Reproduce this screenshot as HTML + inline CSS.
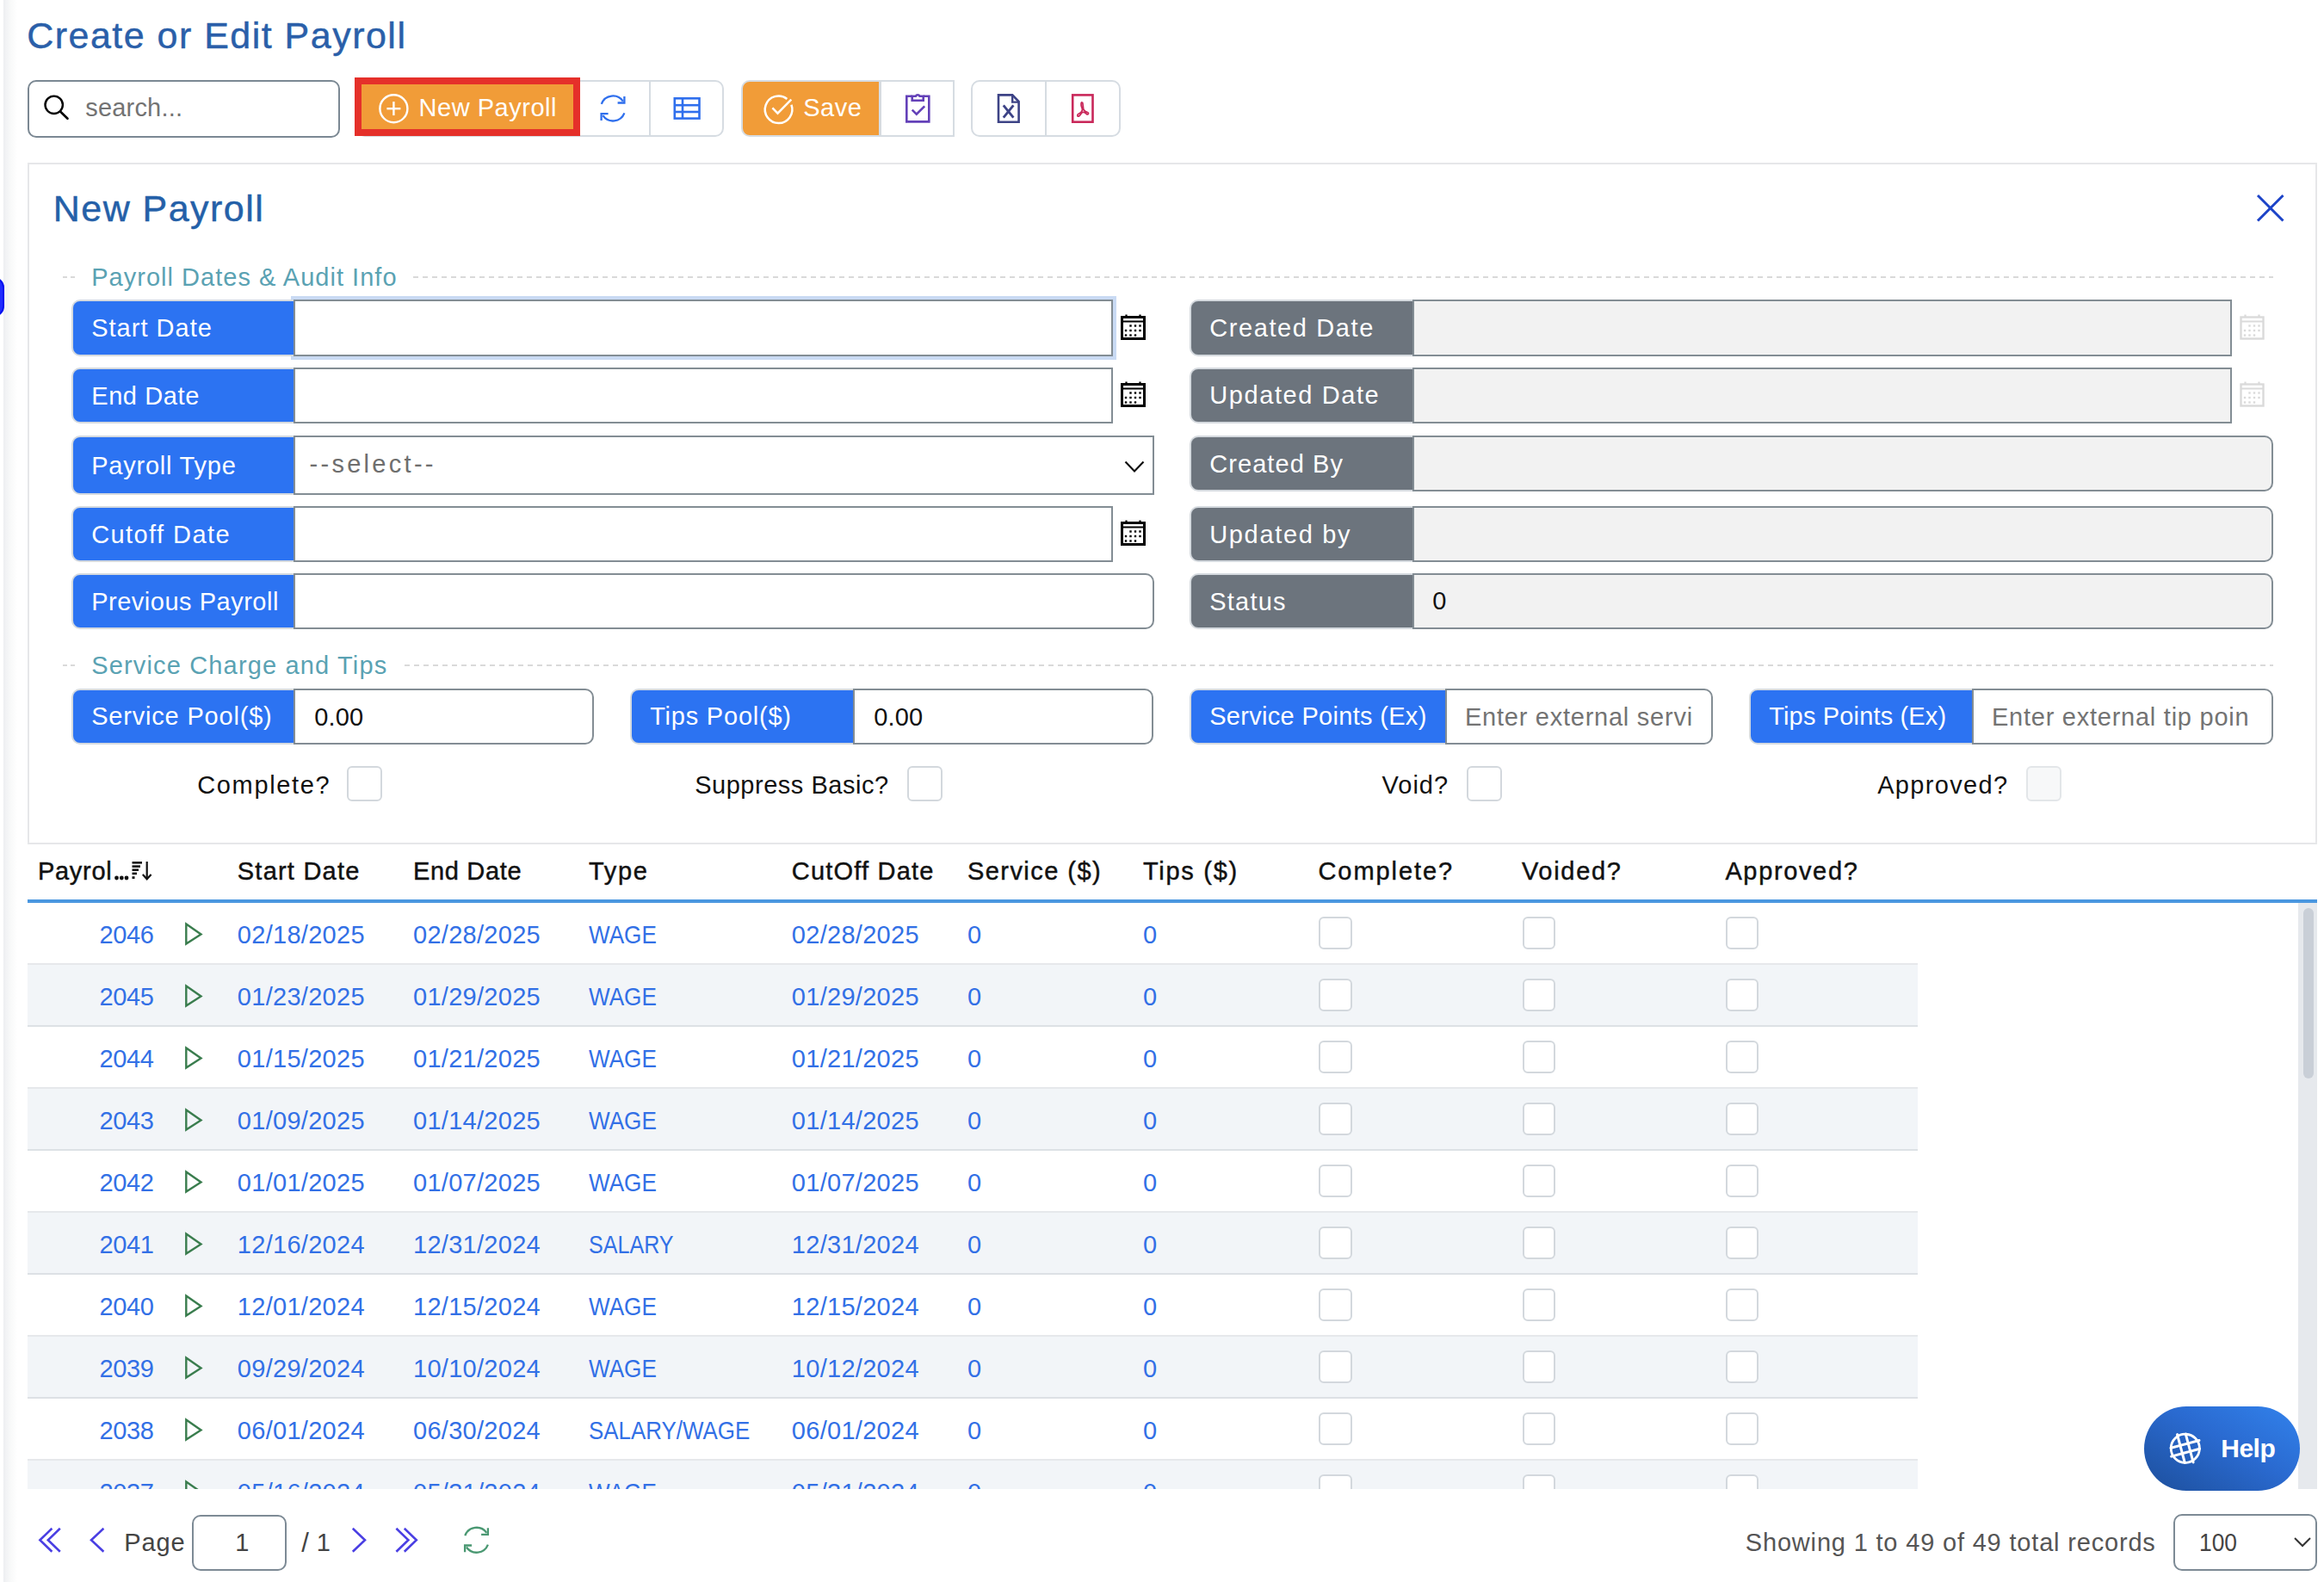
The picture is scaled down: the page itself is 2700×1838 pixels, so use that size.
<!DOCTYPE html><html><head><meta charset="utf-8"><style>
html,body{margin:0;padding:0;}
body{width:2700px;height:1838px;position:relative;overflow:hidden;background:#fff;font-family:'Liberation Sans', sans-serif;}
.t{position:absolute;white-space:nowrap;line-height:1;font-family:'Liberation Sans', sans-serif;}
.r{position:absolute;box-sizing:border-box;}
svg{position:absolute;overflow:visible;}
</style></head><body>

<div class="r" style="left:4px;top:0px;width:16px;height:1838px;background:linear-gradient(to right,#eceef1 0px,#f2f3f5 3px,#f8f9f9 8px,#fff 16px)"></div>
<div class="r" style="left:-20px;top:322px;width:24.5px;height:46px;background:#1f2bff;border:2px solid #0010f0;border-radius:12px"></div>
<div class="t" style="left:31.2px;top:20.4px;font-size:43px;color:#2a5fa9;letter-spacing:1.48px;-webkit-text-stroke:0.45px currentColor;">Create or Edit Payroll</div>
<div class="r" style="left:32px;top:93px;width:363px;height:67px;border:2px solid #7b8893;border-radius:10px;background:#fff"></div>
<svg style="left:0;top:0" width="2700" height="1838"><circle cx="62.7" cy="121.8" r="10.2" fill="none" stroke="#000" stroke-width="2.4"/><line x1="70" y1="129.5" x2="78.5" y2="137.8" stroke="#000" stroke-width="2.6" stroke-linecap="round"/></svg>
<div class="t" style="left:99.2px;top:111.1px;font-size:29px;color:#737373;letter-spacing:0.2px;">search...</div>
<div class="r" style="left:414px;top:93px;width:427px;height:66px;border:2px solid #d6dce2;border-radius:10px;background:#fff"></div>
<div class="r" style="left:754px;top:94px;width:2px;height:64px;background:#d6dce2"></div>
<div class="r" style="left:412px;top:90px;width:262px;height:68px;background:#f19c38;border:8px solid #e5302a"></div>
<svg style="left:0;top:0" width="2700" height="1838"><circle cx="457.4" cy="126.2" r="16" fill="none" stroke="#fff" stroke-width="2.4"/><line x1="457.4" y1="118.1" x2="457.4" y2="134.1" stroke="#fff" stroke-width="2.4"/><line x1="449.4" y1="126.2" x2="465.4" y2="126.2" stroke="#fff" stroke-width="2.4"/></svg>
<div class="t" style="left:486.5px;top:110.6px;font-size:29px;color:#fff;letter-spacing:0.53px;">New Payroll</div>
<svg style="left:0;top:0" width="2700" height="1838"><g transform="translate(712 126) scale(1.0)" fill="none" stroke="#2f6fed" stroke-width="2.3"><path d="M-13.2 -5.2 A14.2 14.2 0 0 1 11.8 -8.4"/><polyline points="13.4,-14 13.4,-6.5 5.6,-6.5"/><path d="M13.4 5.4 A14.2 14.2 0 0 1 -11.6 8.2"/><polyline points="-13.4,14 -13.4,6.2 -5.4,6.2"/></g></svg>
<svg style="left:0;top:0" width="2700" height="1838" fill="none" stroke="#2f6fed" stroke-width="2.6"><rect x="783.8" y="114.3" width="28.7" height="23.3"/><line x1="783" y1="122.2" x2="813" y2="122.2"/><line x1="783" y1="130" x2="813" y2="130"/><line x1="793" y1="114" x2="793" y2="138"/></svg>
<div class="r" style="left:861px;top:93px;width:162px;height:66px;background:#f19c38;border:2px solid #d6dce2;border-radius:10px 0 0 10px"></div>
<div class="r" style="left:1022px;top:93px;width:87px;height:66px;border:2px solid #d6dce2;background:#fff"></div>
<svg style="left:0;top:0" width="2700" height="1838" fill="none" stroke="#fff" stroke-width="2.5"><path d="M914.4 114.9 A15.8 15.8 0 1 0 919.4 121.8"/><polyline points="897.4,125.3 903.5,131.6 919.3,115.6"/></svg>
<div class="t" style="left:933.2px;top:110.6px;font-size:29px;color:#fff;letter-spacing:0.53px;">Save</div>
<svg style="left:0;top:0" width="2700" height="1838" fill="none" stroke="#6340b8" stroke-width="2.6"><path d="M1059.5 111.7 H1053.3 V141.4 H1079.3 V111.7 H1073"/><path d="M1059.7 111.7 V116.8 H1072.7 V111.7 H1068.5 A2.6 2.6 0 0 0 1063.9 111.7 Z"/><polyline points="1059.7,127.6 1064.8,132.6 1074.2,123.3"/></svg>
<div class="r" style="left:1128px;top:93px;width:174px;height:66px;border:2px solid #d6dce2;border-radius:10px;background:#fff"></div>
<div class="r" style="left:1214px;top:94px;width:2px;height:64px;background:#d6dce2"></div>
<svg style="left:0;top:0" width="2700" height="1838" fill="none"><path d="M1160 110.4 H1176.2 L1183.6 118 V141.7 H1160 Z" stroke="#3d4386" stroke-width="2.6"/><path d="M1176.2 110.4 V118.6 H1183.6" stroke="#3d4386" stroke-width="2.4"/><line x1="1165.8" y1="122.3" x2="1177.4" y2="136.6" stroke="#3d4386" stroke-width="2.8"/><line x1="1177.4" y1="122.3" x2="1165.8" y2="136.6" stroke="#3d4386" stroke-width="2.8"/><rect x="1246.2" y="110.4" width="23.3" height="31.3" stroke="#c9285a" stroke-width="2.6"/><path d="M1257 118.5 C1255.2 119.5 1256.2 124 1257.3 126 C1258 129 1255.5 131 1253.5 132 C1251 133 1251.5 136 1253.5 135 C1255.5 133.5 1256 131 1258 130.5 C1260 130 1261 131 1262.5 132.5 C1264 134 1265.5 131 1263.5 130.5 C1261.5 130 1260 129.5 1259 127.5 C1258 125.5 1258.6 120 1257.3 118.6" stroke="#c9285a" stroke-width="1.8"/></svg>
<div class="r" style="left:32px;top:189px;width:2660px;height:792px;border:2px solid #e6e7e9;background:#fff"></div>
<div class="t" style="left:61.8px;top:221.1px;font-size:43px;color:#2460a8;letter-spacing:1.46px;-webkit-text-stroke:0.45px currentColor;">New Payroll</div>
<svg style="left:0;top:0" width="2700" height="1838" stroke="#1d44c8" stroke-width="3"><line x1="2623" y1="227" x2="2652.5" y2="256.5"/><line x1="2652.5" y1="227" x2="2623" y2="256.5"/></svg>
<div class="r" style="left:73px;top:321px;width:15px;height:2px;background:repeating-linear-gradient(to right,#d9d9d9 0 5px,transparent 5px 9px)"></div>
<div class="t" style="left:106.2px;top:307.6px;font-size:29px;color:#5aa2b3;letter-spacing:1.02px;">Payroll Dates &amp; Audit Info</div>
<div class="r" style="left:480px;top:321px;width:2161px;height:2px;background:repeating-linear-gradient(to right,#d9d9d9 0 6px,transparent 6px 11px)"></div>
<div class="r" style="left:338px;top:344px;width:959px;height:74px;background:#c9daf3"></div>
<div class="r" style="left:83px;top:348px;width:259px;height:66px;background:#2c73f2;border:2px solid #d5dadf;border-right:none;border-radius:10px 0 0 10px"></div>
<div class="t" style="left:106.2px;top:367.1px;font-size:29px;color:#fff;letter-spacing:1.01px;">Start Date</div>
<div class="r" style="left:341px;top:348px;width:952px;height:66px;background:#fff;border:2px solid #838d94;border-radius:0;"></div>
<svg style="left:1302px;top:364.5px" width="29" height="30" viewBox="0 0 29 30"><rect x="1.5" y="3.5" width="26" height="25" fill="none" stroke="#000" stroke-width="3"/><line x1="1.5" y1="8.5" x2="27.5" y2="8.5" stroke="#000" stroke-width="2"/><line x1="6.5" y1="0.5" x2="6.5" y2="4" stroke="#000" stroke-width="2.2"/><line x1="22.5" y1="0.5" x2="22.5" y2="4" stroke="#000" stroke-width="2.2"/><rect x="10.3" y="12.3" width="2.4" height="2.4" fill="#000"/><rect x="15.8" y="12.3" width="2.4" height="2.4" fill="#000"/><rect x="21.3" y="12.3" width="2.4" height="2.4" fill="#000"/><rect x="4.8" y="17.8" width="2.4" height="2.4" fill="#000"/><rect x="10.3" y="17.8" width="2.4" height="2.4" fill="#000"/><rect x="15.8" y="17.8" width="2.4" height="2.4" fill="#000"/><rect x="21.3" y="17.8" width="2.4" height="2.4" fill="#000"/><rect x="4.8" y="23.3" width="2.4" height="2.4" fill="#000"/><rect x="10.3" y="23.3" width="2.4" height="2.4" fill="#000"/><rect x="15.8" y="23.3" width="2.4" height="2.4" fill="#000"/></svg>
<div class="r" style="left:83px;top:427px;width:259px;height:65px;background:#2c73f2;border:2px solid #d5dadf;border-right:none;border-radius:10px 0 0 10px"></div>
<div class="t" style="left:106.2px;top:445.6px;font-size:29px;color:#fff;letter-spacing:0.6px;">End Date</div>
<div class="r" style="left:341px;top:427px;width:952px;height:65px;background:#fff;border:2px solid #838d94;border-radius:0;"></div>
<svg style="left:1302px;top:443.0px" width="29" height="30" viewBox="0 0 29 30"><rect x="1.5" y="3.5" width="26" height="25" fill="none" stroke="#000" stroke-width="3"/><line x1="1.5" y1="8.5" x2="27.5" y2="8.5" stroke="#000" stroke-width="2"/><line x1="6.5" y1="0.5" x2="6.5" y2="4" stroke="#000" stroke-width="2.2"/><line x1="22.5" y1="0.5" x2="22.5" y2="4" stroke="#000" stroke-width="2.2"/><rect x="10.3" y="12.3" width="2.4" height="2.4" fill="#000"/><rect x="15.8" y="12.3" width="2.4" height="2.4" fill="#000"/><rect x="21.3" y="12.3" width="2.4" height="2.4" fill="#000"/><rect x="4.8" y="17.8" width="2.4" height="2.4" fill="#000"/><rect x="10.3" y="17.8" width="2.4" height="2.4" fill="#000"/><rect x="15.8" y="17.8" width="2.4" height="2.4" fill="#000"/><rect x="21.3" y="17.8" width="2.4" height="2.4" fill="#000"/><rect x="4.8" y="23.3" width="2.4" height="2.4" fill="#000"/><rect x="10.3" y="23.3" width="2.4" height="2.4" fill="#000"/><rect x="15.8" y="23.3" width="2.4" height="2.4" fill="#000"/></svg>
<div class="r" style="left:83px;top:506px;width:259px;height:69px;background:#2c73f2;border:2px solid #d5dadf;border-right:none;border-radius:10px 0 0 10px"></div>
<div class="t" style="left:106.2px;top:526.6px;font-size:29px;color:#fff;letter-spacing:0.78px;">Payroll Type</div>
<div class="r" style="left:341px;top:506px;width:1000px;height:69px;background:#fff;border:2px solid #838d94;border-radius:0;"></div>
<div class="t" style="left:359.5px;top:524.6px;font-size:29px;color:#6e6e6e;letter-spacing:3.29px;">--select--</div>
<svg style="left:0;top:0" width="2700" height="1838"><polyline points="1307.5,536.5 1318,547.5 1328.5,536.5" fill="none" stroke="#111" stroke-width="2.2"/></svg>
<div class="r" style="left:83px;top:588px;width:259px;height:65px;background:#2c73f2;border:2px solid #d5dadf;border-right:none;border-radius:10px 0 0 10px"></div>
<div class="t" style="left:106.2px;top:606.6px;font-size:29px;color:#fff;letter-spacing:1.42px;">Cutoff Date</div>
<div class="r" style="left:341px;top:588px;width:952px;height:65px;background:#fff;border:2px solid #838d94;border-radius:0;"></div>
<svg style="left:1302px;top:604.0px" width="29" height="30" viewBox="0 0 29 30"><rect x="1.5" y="3.5" width="26" height="25" fill="none" stroke="#000" stroke-width="3"/><line x1="1.5" y1="8.5" x2="27.5" y2="8.5" stroke="#000" stroke-width="2"/><line x1="6.5" y1="0.5" x2="6.5" y2="4" stroke="#000" stroke-width="2.2"/><line x1="22.5" y1="0.5" x2="22.5" y2="4" stroke="#000" stroke-width="2.2"/><rect x="10.3" y="12.3" width="2.4" height="2.4" fill="#000"/><rect x="15.8" y="12.3" width="2.4" height="2.4" fill="#000"/><rect x="21.3" y="12.3" width="2.4" height="2.4" fill="#000"/><rect x="4.8" y="17.8" width="2.4" height="2.4" fill="#000"/><rect x="10.3" y="17.8" width="2.4" height="2.4" fill="#000"/><rect x="15.8" y="17.8" width="2.4" height="2.4" fill="#000"/><rect x="21.3" y="17.8" width="2.4" height="2.4" fill="#000"/><rect x="4.8" y="23.3" width="2.4" height="2.4" fill="#000"/><rect x="10.3" y="23.3" width="2.4" height="2.4" fill="#000"/><rect x="15.8" y="23.3" width="2.4" height="2.4" fill="#000"/></svg>
<div class="r" style="left:83px;top:666px;width:259px;height:65px;background:#2c73f2;border:2px solid #d5dadf;border-right:none;border-radius:10px 0 0 10px"></div>
<div class="t" style="left:106.2px;top:684.6px;font-size:29px;color:#fff;letter-spacing:0.51px;">Previous Payroll</div>
<div class="r" style="left:341px;top:666px;width:1000px;height:65px;background:#fff;border:2px solid #838d94;border-radius:0 10px 10px 0;"></div>
<div class="r" style="left:1382px;top:348px;width:260px;height:66px;background:#6c747d;border:2px solid #d5dadf;border-right:none;border-radius:10px 0 0 10px"></div>
<div class="t" style="left:1405.2px;top:367.1px;font-size:29px;color:#fff;letter-spacing:1.6px;">Created Date</div>
<div class="r" style="left:1641px;top:348px;width:952px;height:66px;background:#f2f2f2;border:2px solid #838d94;border-radius:0;"></div>
<svg style="left:2602px;top:365.0px" width="29" height="30" viewBox="0 0 29 30"><rect x="1.5" y="3.5" width="26" height="25" fill="none" stroke="#dadada" stroke-width="2.4"/><line x1="1.5" y1="8.5" x2="27.5" y2="8.5" stroke="#dadada" stroke-width="2"/><line x1="6.5" y1="0.5" x2="6.5" y2="4" stroke="#dadada" stroke-width="2.2"/><line x1="22.5" y1="0.5" x2="22.5" y2="4" stroke="#dadada" stroke-width="2.2"/><rect x="10.3" y="12.3" width="2.4" height="2.4" fill="#dadada"/><rect x="15.8" y="12.3" width="2.4" height="2.4" fill="#dadada"/><rect x="21.3" y="12.3" width="2.4" height="2.4" fill="#dadada"/><rect x="4.8" y="17.8" width="2.4" height="2.4" fill="#dadada"/><rect x="10.3" y="17.8" width="2.4" height="2.4" fill="#dadada"/><rect x="15.8" y="17.8" width="2.4" height="2.4" fill="#dadada"/><rect x="21.3" y="17.8" width="2.4" height="2.4" fill="#dadada"/><rect x="4.8" y="23.3" width="2.4" height="2.4" fill="#dadada"/><rect x="10.3" y="23.3" width="2.4" height="2.4" fill="#dadada"/><rect x="15.8" y="23.3" width="2.4" height="2.4" fill="#dadada"/></svg>
<div class="r" style="left:1382px;top:426.5px;width:260px;height:65.5px;background:#6c747d;border:2px solid #d5dadf;border-right:none;border-radius:10px 0 0 10px"></div>
<div class="t" style="left:1405.2px;top:445.4px;font-size:29px;color:#fff;letter-spacing:1.6px;">Updated Date</div>
<div class="r" style="left:1641px;top:426.5px;width:952px;height:65.5px;background:#f2f2f2;border:2px solid #838d94;border-radius:0;"></div>
<svg style="left:2602px;top:443.25px" width="29" height="30" viewBox="0 0 29 30"><rect x="1.5" y="3.5" width="26" height="25" fill="none" stroke="#dadada" stroke-width="2.4"/><line x1="1.5" y1="8.5" x2="27.5" y2="8.5" stroke="#dadada" stroke-width="2"/><line x1="6.5" y1="0.5" x2="6.5" y2="4" stroke="#dadada" stroke-width="2.2"/><line x1="22.5" y1="0.5" x2="22.5" y2="4" stroke="#dadada" stroke-width="2.2"/><rect x="10.3" y="12.3" width="2.4" height="2.4" fill="#dadada"/><rect x="15.8" y="12.3" width="2.4" height="2.4" fill="#dadada"/><rect x="21.3" y="12.3" width="2.4" height="2.4" fill="#dadada"/><rect x="4.8" y="17.8" width="2.4" height="2.4" fill="#dadada"/><rect x="10.3" y="17.8" width="2.4" height="2.4" fill="#dadada"/><rect x="15.8" y="17.8" width="2.4" height="2.4" fill="#dadada"/><rect x="21.3" y="17.8" width="2.4" height="2.4" fill="#dadada"/><rect x="4.8" y="23.3" width="2.4" height="2.4" fill="#dadada"/><rect x="10.3" y="23.3" width="2.4" height="2.4" fill="#dadada"/><rect x="15.8" y="23.3" width="2.4" height="2.4" fill="#dadada"/></svg>
<div class="r" style="left:1382px;top:506px;width:260px;height:65px;background:#6c747d;border:2px solid #d5dadf;border-right:none;border-radius:10px 0 0 10px"></div>
<div class="t" style="left:1405.2px;top:524.6px;font-size:29px;color:#fff;letter-spacing:1.07px;">Created By</div>
<div class="r" style="left:1641px;top:506px;width:1000px;height:65px;background:#f2f2f2;border:2px solid #838d94;border-radius:0 10px 10px 0;"></div>
<div class="r" style="left:1382px;top:588px;width:260px;height:65px;background:#6c747d;border:2px solid #d5dadf;border-right:none;border-radius:10px 0 0 10px"></div>
<div class="t" style="left:1405.2px;top:606.6px;font-size:29px;color:#fff;letter-spacing:1.67px;">Updated by</div>
<div class="r" style="left:1641px;top:588px;width:1000px;height:65px;background:#f2f2f2;border:2px solid #838d94;border-radius:0 10px 10px 0;"></div>
<div class="r" style="left:1382px;top:666px;width:260px;height:65px;background:#6c747d;border:2px solid #d5dadf;border-right:none;border-radius:10px 0 0 10px"></div>
<div class="t" style="left:1405.2px;top:684.6px;font-size:29px;color:#fff;letter-spacing:1.24px;">Status</div>
<div class="r" style="left:1641px;top:666px;width:1000px;height:65px;background:#f2f2f2;border:2px solid #838d94;border-radius:0 10px 10px 0;"></div>
<div class="t" style="left:1664.2px;top:683.6px;font-size:29px;color:#111;">0</div>
<div class="r" style="left:73px;top:772px;width:15px;height:2px;background:repeating-linear-gradient(to right,#d9d9d9 0 5px,transparent 5px 9px)"></div>
<div class="t" style="left:106.2px;top:758.6px;font-size:29px;color:#5aa2b3;letter-spacing:1.16px;">Service Charge and Tips</div>
<div class="r" style="left:470px;top:772px;width:2171px;height:2px;background:repeating-linear-gradient(to right,#d9d9d9 0 6px,transparent 6px 11px)"></div>
<div class="r" style="left:83px;top:800px;width:259px;height:64.5px;background:#2c73f2;border:2px solid #d5dadf;border-right:none;border-radius:10px 0 0 10px"></div>
<div class="t" style="left:106.2px;top:818.4px;font-size:29px;color:#fff;letter-spacing:0.81px;">Service Pool($)</div>
<div class="r" style="left:341px;top:800px;width:349px;height:64.5px;background:#fff;border:2px solid #838d94;border-radius:0 10px 10px 0;"></div>
<div class="t" style="left:365.2px;top:818.6px;font-size:29px;color:#111;letter-spacing:0.2px;">0.00</div>
<div class="r" style="left:732px;top:800px;width:260px;height:64.5px;background:#2c73f2;border:2px solid #d5dadf;border-right:none;border-radius:10px 0 0 10px"></div>
<div class="t" style="left:755.2px;top:818.4px;font-size:29px;color:#fff;letter-spacing:0.78px;">Tips Pool($)</div>
<div class="r" style="left:991px;top:800px;width:349px;height:64.5px;background:#fff;border:2px solid #838d94;border-radius:0 10px 10px 0;"></div>
<div class="t" style="left:1015.2px;top:818.6px;font-size:29px;color:#111;letter-spacing:0.2px;">0.00</div>
<div class="r" style="left:1382px;top:800px;width:298px;height:64.5px;background:#2c73f2;border:2px solid #d5dadf;border-right:none;border-radius:10px 0 0 10px"></div>
<div class="t" style="left:1405.2px;top:818.4px;font-size:29px;color:#fff;letter-spacing:0.31px;">Service Points (Ex)</div>
<div class="r" style="left:1679px;top:800px;width:311px;height:64.5px;background:#fff;border:2px solid #838d94;border-radius:0 10px 10px 0;"></div>
<div class="t" style="left:1702px;top:818.6px;width:265px;overflow:hidden;font-size:29px;color:#737373;letter-spacing:0.75px">Enter external servi</div>
<div class="r" style="left:2032px;top:800px;width:260px;height:64.5px;background:#2c73f2;border:2px solid #d5dadf;border-right:none;border-radius:10px 0 0 10px"></div>
<div class="t" style="left:2055.2px;top:818.4px;font-size:29px;color:#fff;letter-spacing:0.16px;">Tips Points (Ex)</div>
<div class="r" style="left:2291px;top:800px;width:350px;height:64.5px;background:#fff;border:2px solid #838d94;border-radius:0 10px 10px 0;"></div>
<div class="t" style="left:2314px;top:818.6px;width:304px;overflow:hidden;font-size:29px;color:#737373;letter-spacing:0.75px">Enter external tip poin</div>
<div class="t" style="left:229.2px;top:897.6px;font-size:29px;color:#111;letter-spacing:1.66px;">Complete?</div>
<div class="r" style="left:403px;top:890px;width:41px;height:41px;border:2px solid #d3d8dd;border-radius:6px;background:#fff"></div>
<div class="t" style="left:807.2px;top:897.6px;font-size:29px;color:#111;letter-spacing:0.52px;">Suppress Basic?</div>
<div class="r" style="left:1054px;top:890px;width:41px;height:41px;border:2px solid #d3d8dd;border-radius:6px;background:#fff"></div>
<div class="t" style="left:1605.6px;top:897.6px;font-size:29px;color:#111;letter-spacing:0.97px;">Void?</div>
<div class="r" style="left:1704px;top:890px;width:41px;height:41px;border:2px solid #d3d8dd;border-radius:6px;background:#fff"></div>
<div class="t" style="left:2181.2px;top:897.6px;font-size:29px;color:#111;letter-spacing:1.32px;">Approved?</div>
<div class="r" style="left:2354px;top:890px;width:41px;height:41px;border:2px solid #e3e6e9;border-radius:6px;background:#f7f8f9"></div>
<div class="t" style="left:43.9px;top:998.2px;font-size:29px;color:#111;letter-spacing:0.72px;-webkit-text-stroke:0.45px currentColor;">Payrol</div>
<svg style="left:0;top:0" width="2700" height="1838" fill="#111"><circle cx="135.5" cy="1020" r="2.4"/><circle cx="141.3" cy="1020" r="2.4"/><circle cx="147" cy="1020" r="2.4"/></svg>
<div class="t" style="left:275.8px;top:998.2px;font-size:29px;color:#111;letter-spacing:1.22px;-webkit-text-stroke:0.45px currentColor;">Start Date</div>
<div class="t" style="left:480.0px;top:998.2px;font-size:29px;color:#111;letter-spacing:0.66px;-webkit-text-stroke:0.45px currentColor;">End Date</div>
<div class="t" style="left:684.0px;top:998.2px;font-size:29px;color:#111;letter-spacing:1.67px;-webkit-text-stroke:0.45px currentColor;">Type</div>
<div class="t" style="left:919.8px;top:998.2px;font-size:29px;color:#111;letter-spacing:1.21px;-webkit-text-stroke:0.45px currentColor;">CutOff Date</div>
<div class="t" style="left:1123.9px;top:998.2px;font-size:29px;color:#111;letter-spacing:1.46px;-webkit-text-stroke:0.45px currentColor;">Service ($)</div>
<div class="t" style="left:1328.0px;top:998.2px;font-size:29px;color:#111;letter-spacing:1.71px;-webkit-text-stroke:0.45px currentColor;">Tips ($)</div>
<div class="t" style="left:1531.5px;top:998.2px;font-size:29px;color:#111;letter-spacing:1.93px;-webkit-text-stroke:0.45px currentColor;">Complete?</div>
<div class="t" style="left:1767.9px;top:998.2px;font-size:29px;color:#111;letter-spacing:1.7px;-webkit-text-stroke:0.45px currentColor;">Voided?</div>
<div class="t" style="left:2004.4px;top:998.2px;font-size:29px;color:#111;letter-spacing:1.64px;-webkit-text-stroke:0.45px currentColor;">Approved?</div>
<svg style="left:0;top:0" width="2700" height="1838"><rect x="153.5" y="1001" width="11.5" height="2.6" fill="#111"/><rect x="153.5" y="1005.3" width="9.5" height="2.6" fill="#111"/><rect x="153.5" y="1009.4" width="7.5" height="2.6" fill="#111"/><rect x="153.5" y="1013.6" width="5.5" height="2.6" fill="#111"/><rect x="153.5" y="1018.2" width="3" height="2.8" fill="#111"/><line x1="170.7" y1="1001" x2="170.7" y2="1021" stroke="#111" stroke-width="2.2"/><polyline points="165.8,1016 170.7,1021.3 175.6,1016" fill="none" stroke="#111" stroke-width="2.2"/></svg>
<div class="r" style="left:32px;top:1045px;width:2660px;height:4px;background:#4a97e0"></div>
<div style="position:absolute;left:0;top:1049px;width:2700px;height:681px;overflow:hidden">
<div class="r" style="left:32px;top:0px;width:2196px;height:72px;background:#fff;border-bottom:2px solid #e6e8eb"></div>
<div class="t" style="left:115.6px;top:22.6px;font-size:29px;color:#3270e6;letter-spacing:-0.37px;">2046</div>
<svg style="left:0;top:0" width="2700" height="1838"><polygon points="216.3,24.5 233.5,36.5 216.3,47.5" fill="none" stroke="#3a7d4e" stroke-width="2.4"/></svg>
<div class="t" style="left:275.8px;top:22.6px;font-size:29px;color:#3270e6;letter-spacing:0.29px;">02/18/2025</div>
<div class="t" style="left:480.0px;top:22.6px;font-size:29px;color:#3270e6;letter-spacing:0.29px;">02/28/2025</div>
<div class="t" style="left:684.0px;top:22.6px;font-size:29px;color:#3270e6;transform:scaleX(0.9011);transform-origin:0px 0;">WAGE</div>
<div class="t" style="left:919.8px;top:22.6px;font-size:29px;color:#3270e6;letter-spacing:0.29px;">02/28/2025</div>
<div class="t" style="left:1123.9px;top:22.6px;font-size:29px;color:#3270e6;">0</div>
<div class="t" style="left:1328.0px;top:22.6px;font-size:29px;color:#3270e6;">0</div>
<div class="r" style="left:1532.3px;top:16px;width:38.299999999999955px;height:38.299999999999955px;border:2px solid #d3d8dd;border-radius:6px;background:#fff"></div>
<div class="r" style="left:1768.7px;top:16px;width:38.299999999999955px;height:38.299999999999955px;border:2px solid #d3d8dd;border-radius:6px;background:#fff"></div>
<div class="r" style="left:2005.2px;top:16px;width:38.299999999999955px;height:38.299999999999955px;border:2px solid #d3d8dd;border-radius:6px;background:#fff"></div>
<div class="r" style="left:32px;top:72px;width:2196px;height:72px;background:#f2f5f8;border-bottom:2px solid #dde1e5"></div>
<div class="t" style="left:115.6px;top:94.6px;font-size:29px;color:#3270e6;letter-spacing:-0.37px;">2045</div>
<svg style="left:0;top:0" width="2700" height="1838"><polygon points="216.3,96.5 233.5,108.5 216.3,119.5" fill="none" stroke="#3a7d4e" stroke-width="2.4"/></svg>
<div class="t" style="left:275.8px;top:94.6px;font-size:29px;color:#3270e6;letter-spacing:0.29px;">01/23/2025</div>
<div class="t" style="left:480.0px;top:94.6px;font-size:29px;color:#3270e6;letter-spacing:0.29px;">01/29/2025</div>
<div class="t" style="left:684.0px;top:94.6px;font-size:29px;color:#3270e6;transform:scaleX(0.9011);transform-origin:0px 0;">WAGE</div>
<div class="t" style="left:919.8px;top:94.6px;font-size:29px;color:#3270e6;letter-spacing:0.29px;">01/29/2025</div>
<div class="t" style="left:1123.9px;top:94.6px;font-size:29px;color:#3270e6;">0</div>
<div class="t" style="left:1328.0px;top:94.6px;font-size:29px;color:#3270e6;">0</div>
<div class="r" style="left:1532.3px;top:88px;width:38.299999999999955px;height:38.299999999999955px;border:2px solid #d3d8dd;border-radius:6px;background:#fff"></div>
<div class="r" style="left:1768.7px;top:88px;width:38.299999999999955px;height:38.299999999999955px;border:2px solid #d3d8dd;border-radius:6px;background:#fff"></div>
<div class="r" style="left:2005.2px;top:88px;width:38.299999999999955px;height:38.299999999999955px;border:2px solid #d3d8dd;border-radius:6px;background:#fff"></div>
<div class="r" style="left:32px;top:144px;width:2196px;height:72px;background:#fff;border-bottom:2px solid #e6e8eb"></div>
<div class="t" style="left:115.6px;top:166.6px;font-size:29px;color:#3270e6;letter-spacing:-0.37px;">2044</div>
<svg style="left:0;top:0" width="2700" height="1838"><polygon points="216.3,168.5 233.5,180.5 216.3,191.5" fill="none" stroke="#3a7d4e" stroke-width="2.4"/></svg>
<div class="t" style="left:275.8px;top:166.6px;font-size:29px;color:#3270e6;letter-spacing:0.29px;">01/15/2025</div>
<div class="t" style="left:480.0px;top:166.6px;font-size:29px;color:#3270e6;letter-spacing:0.29px;">01/21/2025</div>
<div class="t" style="left:684.0px;top:166.6px;font-size:29px;color:#3270e6;transform:scaleX(0.9011);transform-origin:0px 0;">WAGE</div>
<div class="t" style="left:919.8px;top:166.6px;font-size:29px;color:#3270e6;letter-spacing:0.29px;">01/21/2025</div>
<div class="t" style="left:1123.9px;top:166.6px;font-size:29px;color:#3270e6;">0</div>
<div class="t" style="left:1328.0px;top:166.6px;font-size:29px;color:#3270e6;">0</div>
<div class="r" style="left:1532.3px;top:160px;width:38.299999999999955px;height:38.299999999999955px;border:2px solid #d3d8dd;border-radius:6px;background:#fff"></div>
<div class="r" style="left:1768.7px;top:160px;width:38.299999999999955px;height:38.299999999999955px;border:2px solid #d3d8dd;border-radius:6px;background:#fff"></div>
<div class="r" style="left:2005.2px;top:160px;width:38.299999999999955px;height:38.299999999999955px;border:2px solid #d3d8dd;border-radius:6px;background:#fff"></div>
<div class="r" style="left:32px;top:216px;width:2196px;height:72px;background:#f2f5f8;border-bottom:2px solid #dde1e5"></div>
<div class="t" style="left:115.6px;top:238.6px;font-size:29px;color:#3270e6;letter-spacing:-0.37px;">2043</div>
<svg style="left:0;top:0" width="2700" height="1838"><polygon points="216.3,240.5 233.5,252.5 216.3,263.5" fill="none" stroke="#3a7d4e" stroke-width="2.4"/></svg>
<div class="t" style="left:275.8px;top:238.6px;font-size:29px;color:#3270e6;letter-spacing:0.29px;">01/09/2025</div>
<div class="t" style="left:480.0px;top:238.6px;font-size:29px;color:#3270e6;letter-spacing:0.29px;">01/14/2025</div>
<div class="t" style="left:684.0px;top:238.6px;font-size:29px;color:#3270e6;transform:scaleX(0.9011);transform-origin:0px 0;">WAGE</div>
<div class="t" style="left:919.8px;top:238.6px;font-size:29px;color:#3270e6;letter-spacing:0.29px;">01/14/2025</div>
<div class="t" style="left:1123.9px;top:238.6px;font-size:29px;color:#3270e6;">0</div>
<div class="t" style="left:1328.0px;top:238.6px;font-size:29px;color:#3270e6;">0</div>
<div class="r" style="left:1532.3px;top:232px;width:38.299999999999955px;height:38.299999999999955px;border:2px solid #d3d8dd;border-radius:6px;background:#fff"></div>
<div class="r" style="left:1768.7px;top:232px;width:38.299999999999955px;height:38.299999999999955px;border:2px solid #d3d8dd;border-radius:6px;background:#fff"></div>
<div class="r" style="left:2005.2px;top:232px;width:38.299999999999955px;height:38.299999999999955px;border:2px solid #d3d8dd;border-radius:6px;background:#fff"></div>
<div class="r" style="left:32px;top:288px;width:2196px;height:72px;background:#fff;border-bottom:2px solid #e6e8eb"></div>
<div class="t" style="left:115.6px;top:310.6px;font-size:29px;color:#3270e6;letter-spacing:-0.37px;">2042</div>
<svg style="left:0;top:0" width="2700" height="1838"><polygon points="216.3,312.5 233.5,324.5 216.3,335.5" fill="none" stroke="#3a7d4e" stroke-width="2.4"/></svg>
<div class="t" style="left:275.8px;top:310.6px;font-size:29px;color:#3270e6;letter-spacing:0.29px;">01/01/2025</div>
<div class="t" style="left:480.0px;top:310.6px;font-size:29px;color:#3270e6;letter-spacing:0.29px;">01/07/2025</div>
<div class="t" style="left:684.0px;top:310.6px;font-size:29px;color:#3270e6;transform:scaleX(0.9011);transform-origin:0px 0;">WAGE</div>
<div class="t" style="left:919.8px;top:310.6px;font-size:29px;color:#3270e6;letter-spacing:0.29px;">01/07/2025</div>
<div class="t" style="left:1123.9px;top:310.6px;font-size:29px;color:#3270e6;">0</div>
<div class="t" style="left:1328.0px;top:310.6px;font-size:29px;color:#3270e6;">0</div>
<div class="r" style="left:1532.3px;top:304px;width:38.299999999999955px;height:38.299999999999955px;border:2px solid #d3d8dd;border-radius:6px;background:#fff"></div>
<div class="r" style="left:1768.7px;top:304px;width:38.299999999999955px;height:38.299999999999955px;border:2px solid #d3d8dd;border-radius:6px;background:#fff"></div>
<div class="r" style="left:2005.2px;top:304px;width:38.299999999999955px;height:38.299999999999955px;border:2px solid #d3d8dd;border-radius:6px;background:#fff"></div>
<div class="r" style="left:32px;top:360px;width:2196px;height:72px;background:#f2f5f8;border-bottom:2px solid #dde1e5"></div>
<div class="t" style="left:115.6px;top:382.6px;font-size:29px;color:#3270e6;letter-spacing:-0.37px;">2041</div>
<svg style="left:0;top:0" width="2700" height="1838"><polygon points="216.3,384.5 233.5,396.5 216.3,407.5" fill="none" stroke="#3a7d4e" stroke-width="2.4"/></svg>
<div class="t" style="left:275.8px;top:382.6px;font-size:29px;color:#3270e6;letter-spacing:0.29px;">12/16/2024</div>
<div class="t" style="left:480.0px;top:382.6px;font-size:29px;color:#3270e6;letter-spacing:0.29px;">12/31/2024</div>
<div class="t" style="left:684.0px;top:382.6px;font-size:29px;color:#3270e6;transform:scaleX(0.8649);transform-origin:0px 0;">SALARY</div>
<div class="t" style="left:919.8px;top:382.6px;font-size:29px;color:#3270e6;letter-spacing:0.29px;">12/31/2024</div>
<div class="t" style="left:1123.9px;top:382.6px;font-size:29px;color:#3270e6;">0</div>
<div class="t" style="left:1328.0px;top:382.6px;font-size:29px;color:#3270e6;">0</div>
<div class="r" style="left:1532.3px;top:376px;width:38.299999999999955px;height:38.299999999999955px;border:2px solid #d3d8dd;border-radius:6px;background:#fff"></div>
<div class="r" style="left:1768.7px;top:376px;width:38.299999999999955px;height:38.299999999999955px;border:2px solid #d3d8dd;border-radius:6px;background:#fff"></div>
<div class="r" style="left:2005.2px;top:376px;width:38.299999999999955px;height:38.299999999999955px;border:2px solid #d3d8dd;border-radius:6px;background:#fff"></div>
<div class="r" style="left:32px;top:432px;width:2196px;height:72px;background:#fff;border-bottom:2px solid #e6e8eb"></div>
<div class="t" style="left:115.6px;top:454.6px;font-size:29px;color:#3270e6;letter-spacing:-0.37px;">2040</div>
<svg style="left:0;top:0" width="2700" height="1838"><polygon points="216.3,456.5 233.5,468.5 216.3,479.5" fill="none" stroke="#3a7d4e" stroke-width="2.4"/></svg>
<div class="t" style="left:275.8px;top:454.6px;font-size:29px;color:#3270e6;letter-spacing:0.29px;">12/01/2024</div>
<div class="t" style="left:480.0px;top:454.6px;font-size:29px;color:#3270e6;letter-spacing:0.29px;">12/15/2024</div>
<div class="t" style="left:684.0px;top:454.6px;font-size:29px;color:#3270e6;transform:scaleX(0.9011);transform-origin:0px 0;">WAGE</div>
<div class="t" style="left:919.8px;top:454.6px;font-size:29px;color:#3270e6;letter-spacing:0.29px;">12/15/2024</div>
<div class="t" style="left:1123.9px;top:454.6px;font-size:29px;color:#3270e6;">0</div>
<div class="t" style="left:1328.0px;top:454.6px;font-size:29px;color:#3270e6;">0</div>
<div class="r" style="left:1532.3px;top:448px;width:38.299999999999955px;height:38.299999999999955px;border:2px solid #d3d8dd;border-radius:6px;background:#fff"></div>
<div class="r" style="left:1768.7px;top:448px;width:38.299999999999955px;height:38.299999999999955px;border:2px solid #d3d8dd;border-radius:6px;background:#fff"></div>
<div class="r" style="left:2005.2px;top:448px;width:38.299999999999955px;height:38.299999999999955px;border:2px solid #d3d8dd;border-radius:6px;background:#fff"></div>
<div class="r" style="left:32px;top:504px;width:2196px;height:72px;background:#f2f5f8;border-bottom:2px solid #dde1e5"></div>
<div class="t" style="left:115.6px;top:526.6px;font-size:29px;color:#3270e6;letter-spacing:-0.37px;">2039</div>
<svg style="left:0;top:0" width="2700" height="1838"><polygon points="216.3,528.5 233.5,540.5 216.3,551.5" fill="none" stroke="#3a7d4e" stroke-width="2.4"/></svg>
<div class="t" style="left:275.8px;top:526.6px;font-size:29px;color:#3270e6;letter-spacing:0.29px;">09/29/2024</div>
<div class="t" style="left:480.0px;top:526.6px;font-size:29px;color:#3270e6;letter-spacing:0.29px;">10/10/2024</div>
<div class="t" style="left:684.0px;top:526.6px;font-size:29px;color:#3270e6;transform:scaleX(0.9011);transform-origin:0px 0;">WAGE</div>
<div class="t" style="left:919.8px;top:526.6px;font-size:29px;color:#3270e6;letter-spacing:0.29px;">10/12/2024</div>
<div class="t" style="left:1123.9px;top:526.6px;font-size:29px;color:#3270e6;">0</div>
<div class="t" style="left:1328.0px;top:526.6px;font-size:29px;color:#3270e6;">0</div>
<div class="r" style="left:1532.3px;top:520px;width:38.299999999999955px;height:38.299999999999955px;border:2px solid #d3d8dd;border-radius:6px;background:#fff"></div>
<div class="r" style="left:1768.7px;top:520px;width:38.299999999999955px;height:38.299999999999955px;border:2px solid #d3d8dd;border-radius:6px;background:#fff"></div>
<div class="r" style="left:2005.2px;top:520px;width:38.299999999999955px;height:38.299999999999955px;border:2px solid #d3d8dd;border-radius:6px;background:#fff"></div>
<div class="r" style="left:32px;top:576px;width:2196px;height:72px;background:#fff;border-bottom:2px solid #e6e8eb"></div>
<div class="t" style="left:115.6px;top:598.6px;font-size:29px;color:#3270e6;letter-spacing:-0.37px;">2038</div>
<svg style="left:0;top:0" width="2700" height="1838"><polygon points="216.3,600.5 233.5,612.5 216.3,623.5" fill="none" stroke="#3a7d4e" stroke-width="2.4"/></svg>
<div class="t" style="left:275.8px;top:598.6px;font-size:29px;color:#3270e6;letter-spacing:0.29px;">06/01/2024</div>
<div class="t" style="left:480.0px;top:598.6px;font-size:29px;color:#3270e6;letter-spacing:0.29px;">06/30/2024</div>
<div class="t" style="left:684.0px;top:598.6px;font-size:29px;color:#3270e6;transform:scaleX(0.8933);transform-origin:0px 0;">SALARY/WAGE</div>
<div class="t" style="left:919.8px;top:598.6px;font-size:29px;color:#3270e6;letter-spacing:0.29px;">06/01/2024</div>
<div class="t" style="left:1123.9px;top:598.6px;font-size:29px;color:#3270e6;">0</div>
<div class="t" style="left:1328.0px;top:598.6px;font-size:29px;color:#3270e6;">0</div>
<div class="r" style="left:1532.3px;top:592px;width:38.299999999999955px;height:38.299999999999955px;border:2px solid #d3d8dd;border-radius:6px;background:#fff"></div>
<div class="r" style="left:1768.7px;top:592px;width:38.299999999999955px;height:38.299999999999955px;border:2px solid #d3d8dd;border-radius:6px;background:#fff"></div>
<div class="r" style="left:2005.2px;top:592px;width:38.299999999999955px;height:38.299999999999955px;border:2px solid #d3d8dd;border-radius:6px;background:#fff"></div>
<div class="r" style="left:32px;top:648px;width:2196px;height:72px;background:#f2f5f8;border-bottom:2px solid #dde1e5"></div>
<div class="t" style="left:115.6px;top:670.6px;font-size:29px;color:#3270e6;letter-spacing:-0.37px;">2037</div>
<svg style="left:0;top:0" width="2700" height="1838"><polygon points="216.3,672.5 233.5,684.5 216.3,695.5" fill="none" stroke="#3a7d4e" stroke-width="2.4"/></svg>
<div class="t" style="left:275.8px;top:670.6px;font-size:29px;color:#3270e6;letter-spacing:0.29px;">05/16/2024</div>
<div class="t" style="left:480.0px;top:670.6px;font-size:29px;color:#3270e6;letter-spacing:0.29px;">05/31/2024</div>
<div class="t" style="left:684.0px;top:670.6px;font-size:29px;color:#3270e6;transform:scaleX(0.9011);transform-origin:0px 0;">WAGE</div>
<div class="t" style="left:919.8px;top:670.6px;font-size:29px;color:#3270e6;letter-spacing:0.29px;">05/31/2024</div>
<div class="t" style="left:1123.9px;top:670.6px;font-size:29px;color:#3270e6;">0</div>
<div class="t" style="left:1328.0px;top:670.6px;font-size:29px;color:#3270e6;">0</div>
<div class="r" style="left:1532.3px;top:664px;width:38.299999999999955px;height:38.299999999999955px;border:2px solid #d3d8dd;border-radius:6px;background:#fff"></div>
<div class="r" style="left:1768.7px;top:664px;width:38.299999999999955px;height:38.299999999999955px;border:2px solid #d3d8dd;border-radius:6px;background:#fff"></div>
<div class="r" style="left:2005.2px;top:664px;width:38.299999999999955px;height:38.299999999999955px;border:2px solid #d3d8dd;border-radius:6px;background:#fff"></div>
<div class="r" style="left:2670px;top:0px;width:22px;height:681px;background:#e6e9ed"></div>
<div class="r" style="left:2676px;top:6px;width:12px;height:198px;background:#c9cfd7;border-radius:6px"></div>
</div>
<div class="r" style="left:2491px;top:1634px;width:181px;height:98px;border-radius:49px;background:linear-gradient(30deg,#1d4f9c 0%,#2a6ad0 55%,#3282ec 100%)"></div>
<svg style="left:0;top:0" width="2700" height="1838" fill="none" stroke="#fff" stroke-width="2.8"><circle cx="2538.8" cy="1682.8" r="16.6"/><g transform="translate(2538.8 1682.8) rotate(-15)" stroke-linecap="round" stroke-width="3"><line x1="-4.8" y1="-18" x2="-4.8" y2="16"/><line x1="4.8" y1="-16" x2="4.8" y2="18"/><line x1="-18" y1="4.8" x2="16" y2="4.8"/><line x1="-16" y1="-4.8" x2="18" y2="-4.8"/></g></svg>
<div class="t" style="left:2580.2px;top:1668.3px;font-size:30px;color:#fff;letter-spacing:-0.47px;font-weight:bold;">Help</div>
<svg style="left:0;top:0" width="2700" height="1838" fill="none" stroke="#4a3fe3" stroke-width="2.6"><polyline points="60.4,1775.8 46.4,1789.3 60.4,1802.8"/><polyline points="69.8,1775.8 55.8,1789.3 69.8,1802.8"/><polyline points="120.4,1775.8 106,1789.3 120.4,1802.8"/><polyline points="409.8,1775.8 424,1789.3 409.8,1802.8"/><polyline points="460.4,1775.8 474.4,1789.3 460.4,1802.8"/><polyline points="469.8,1775.8 483.8,1789.3 469.8,1802.8"/></svg>
<div class="t" style="left:144.2px;top:1777.6px;font-size:29px;color:#444;letter-spacing:0.87px;">Page</div>
<div class="r" style="left:223px;top:1759.5px;width:110px;height:65.5px;border:2px solid #7d8a95;border-radius:10px;background:#fff"></div>
<div class="t" style="left:273.2px;top:1777.6px;font-size:29px;color:#444;">1</div>
<div class="t" style="left:350.2px;top:1777.0px;font-size:31px;color:#444;">/</div>
<div class="t" style="left:367.7px;top:1777.6px;font-size:29px;color:#444;">1</div>
<svg style="left:0;top:0" width="2700" height="1838"><g transform="translate(553.5 1789.3) scale(1.0)" fill="none" stroke="#4a9872" stroke-width="2.3"><path d="M-13.2 -5.2 A14.2 14.2 0 0 1 11.8 -8.4"/><polyline points="13.4,-14 13.4,-6.5 5.6,-6.5"/><path d="M13.4 5.4 A14.2 14.2 0 0 1 -11.6 8.2"/><polyline points="-13.4,14 -13.4,6.2 -5.4,6.2"/></g></svg>
<div class="t" style="left:2027.8px;top:1777.6px;font-size:29px;color:#555;letter-spacing:0.82px;">Showing 1 to 49 of 49 total records</div>
<div class="r" style="left:2525px;top:1759px;width:167px;height:66px;border:2px solid #7d8a95;border-radius:10px;background:#fff"></div>
<div class="t" style="left:2555.2px;top:1777.6px;font-size:29px;color:#444;transform:scaleX(0.9083);transform-origin:0px 0;">100</div>
<svg style="left:0;top:0" width="2700" height="1838"><polyline points="2666,1787 2675,1796 2684,1787" fill="none" stroke="#333" stroke-width="2"/></svg>
</body></html>
